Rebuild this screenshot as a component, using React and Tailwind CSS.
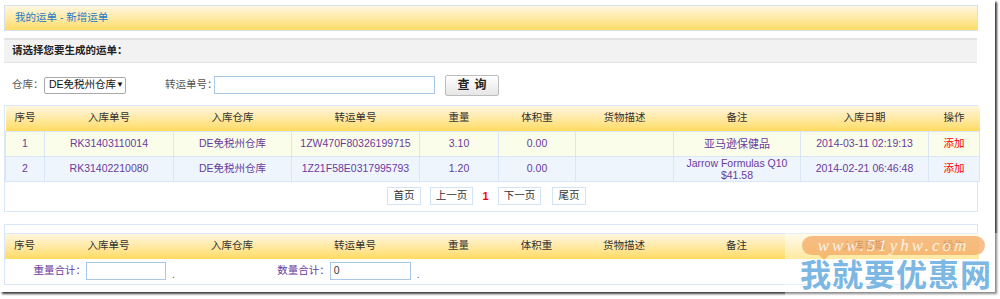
import React from "react";

const cols = [
  { label: "序号", w: 39 },
  { label: "入库单号", w: 129 },
  { label: "入库仓库", w: 118 },
  { label: "转运单号", w: 128 },
  { label: "重量", w: 79 },
  { label: "体积重", w: 77 },
  { label: "货物描述", w: 98 },
  { label: "备注", w: 127 },
  { label: "入库日期", w: 128 },
  { label: "操作", w: 51 },
];

const rows = [
  {
    no: "1",
    rk: "RK31403110014",
    wh: "DE免税州仓库",
    zy: "1ZW470F80326199715",
    weight: "3.10",
    vol: "0.00",
    desc: "",
    note: ["亚马逊保健品"],
    date: "2014-03-11 02:19:13",
    bg: "bg-[#fafde9]",
  },
  {
    no: "2",
    rk: "RK31402210080",
    wh: "DE免税州仓库",
    zy: "1Z21F58E0317995793",
    weight: "1.20",
    vol: "0.00",
    desc: "",
    note: ["Jarrow Formulas Q10", "$41.58"],
    date: "2014-02-21 06:46:48",
    bg: "bg-[#eef5fd]",
  },
];

const font = { fontFamily: '"Liberation Sans", "Noto Sans CJK SC", sans-serif' };

function HeadRow() {
  return (
    <tr className="h-[25px] bg-gradient-to-b from-[#fff6dd] to-[#ffdb5e]">
      {cols.map((c) => (
        <th key={c.label} style={{ width: c.w }} className="font-normal text-[10.5px] text-[#333] text-center">
          {c.label}
        </th>
      ))}
    </tr>
  );
}

function PageBtn({ children, wide }) {
  return (
    <span
      className={`inline-flex items-center justify-center h-[18px] ${wide ? "w-[43px]" : "w-[34px]"} border border-[#d3e3f6] bg-white text-[10.5px] text-[#333] whitespace-nowrap`}
    >
      {children}
    </span>
  );
}

export default function App() {
  return (
    <div style={font} className="relative w-[1000px] h-[299px] bg-white overflow-hidden">
      <div className="w-[995px] h-[292px] bg-white shadow-[2px_2px_2px_rgba(40,40,40,0.9)] pt-[5px] pl-[4px]">
        <div className="w-[974px] h-[26px] border border-[#d5e2ee] bg-gradient-to-b from-[#fff6df] to-[#ffdc63] flex items-center pl-[10px] text-[10.5px] text-[#1d7bc9]">
          我的运单 - 新增运单
        </div>

        <div className="mt-[7px] w-[973px] h-[25px] border-t-2 border-b border-[#e3e3e3] bg-[#f2f2f2] flex items-center pl-[8px] text-[10.5px] text-[#222] font-bold">
          请选择您要生成的运单：
        </div>

        <div className="mt-[11px] h-[22px] flex items-center text-[10.5px] text-[#555] whitespace-nowrap">
          <span className="ml-[8px] w-[32px]">仓库：</span>
          <span className="w-[82px] h-[17px] border border-[#a9a9a9] rounded-[2px] flex items-center justify-between px-[4px] text-[#111] text-[10.5px]">
            DE免税州仓库<span className="text-[8px]">▼</span>
          </span>
          <span className="ml-[39px] w-[49px]">转运单号：</span>
          <span className="w-[221px] h-[18px] border border-[#a9c7e6]"></span>
          <span className="ml-[10px] w-[54px] h-[21px] border border-[#bdbdbd] rounded-[2px] bg-gradient-to-b from-white to-[#e6e6e6] flex items-center justify-center font-bold text-[#222] text-[12px] tracking-[5px] pl-[5px]">
            查询
          </span>
        </div>

        <div className="mt-[9px] w-[974px] border border-[#d8e6f7]">
          <table className="w-full border-collapse table-fixed">
            <thead>
              <HeadRow />
            </thead>
            <tbody>
              {rows.map((r) => (
                <tr key={r.no} className={`${r.bg} h-[25px] text-[10.5px] text-[#6b3a9c] text-center`}>
                  <td className="border border-[#d8e6f7]">{r.no}</td>
                  <td className="border border-[#d8e6f7]">{r.rk}</td>
                  <td className="border border-[#d8e6f7]">{r.wh}</td>
                  <td className="border border-[#d8e6f7]">{r.zy}</td>
                  <td className="border border-[#d8e6f7]">{r.weight}</td>
                  <td className="border border-[#d8e6f7]">{r.vol}</td>
                  <td className="border border-[#d8e6f7]">{r.desc}</td>
                  <td className="border border-[#d8e6f7] leading-[12px]">
                    {r.note.length === 1 ? (
                      <span className="text-[11px]">{r.note[0]}</span>
                    ) : (
                      r.note.map((n) => <div key={n}>{n}</div>)
                    )}
                  </td>
                  <td className="border border-[#d8e6f7]">{r.date}</td>
                  <td className="border border-[#d8e6f7] text-[#ff0000]">添加</td>
                </tr>
              ))}
            </tbody>
          </table>
          <div className="h-[29px] flex items-center pl-[382px]">
            <PageBtn>首页</PageBtn>
            <span className="ml-[9px] flex">
              <PageBtn wide>上一页</PageBtn>
            </span>
            <span className="w-[25px] text-center text-[11px] font-bold text-[#ff0000]">1</span>
            <PageBtn wide>下一页</PageBtn>
            <span className="ml-[11px] flex">
              <PageBtn>尾页</PageBtn>
            </span>
          </div>
        </div>

        <div className="mt-[12px] w-[974px] border border-[#d8e6f7]">
          <div className="h-[9px] border-b border-[#d8e6f7]"></div>
          <table className="w-full border-collapse table-fixed">
            <thead>
              <HeadRow />
            </thead>
          </table>
          <div className="h-[25px] flex items-center text-[10.5px] text-[#6b3a9c]">
            <span className="w-[81px] text-right">重量合计：</span>
            <span className="w-[80px] h-[18px] border border-[#a9c7e6]"></span>
            <span className="ml-[6px] text-[#555] text-[10px] mt-[6px]">.</span>
            <span className="w-[155px] text-right">数量合计：</span>
            <span className="w-[81px] h-[18px] border border-[#a9c7e6] text-[#333] flex items-center pl-[3px]">0</span>
            <span className="ml-[6px] text-[#555] text-[10px] mt-[6px]">.</span>
          </div>
        </div>
      </div>

      <div className="absolute left-[785px] top-[233px] w-[215px] h-[66px] bg-white/40"></div>
      <div className="absolute left-[802px] top-[236px] w-[183px] h-[19px] rounded-[10px] bg-[#f2a45a]/70 flex items-center justify-center">
        <span style={{ fontFamily: '"Liberation Serif", serif' }} className="italic text-[17px] tracking-[3px] text-white/80">
          www.51yhw.com
        </span>
      </div>
      <div className="absolute left-[819px] top-[255px] w-0 h-0 border-l-[5px] border-r-[5px] border-t-[5px] border-l-transparent border-r-transparent border-t-[#f2a45a]/70"></div>
      <div
        style={{ fontFamily: '"Noto Sans CJK SC", sans-serif' }}
        className="absolute left-[800px] top-[255px] text-[31px] leading-[36px] font-bold text-[#6aaee0]/90 tracking-[1px]"
      >
        我就要优惠网
      </div>
    </div>
  );
}
